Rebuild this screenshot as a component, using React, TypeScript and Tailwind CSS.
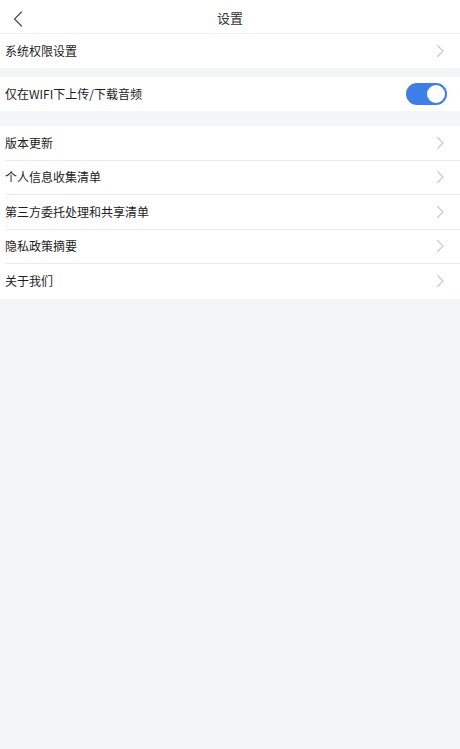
import React from "react";

const font = { fontFamily: '"Noto Sans CJK SC", "Noto Sans", sans-serif' };

function Chevron() {
  return (
    <svg width="8" height="14" viewBox="0 0 8 14" fill="none" className="mr-[16px]">
      <path d="M1.5 1.5l5.5 5.5-5.5 5.5" stroke="#c8c8c8" strokeWidth="1.1" strokeLinecap="round" strokeLinejoin="round" />
    </svg>
  );
}

function Row({
  label,
  divider = true,
  right,
  h = "h-[34.5px]",
}: {
  label: string;
  divider?: boolean;
  right?: React.ReactNode;
  h?: string;
}) {
  return (
    <div className={`flex ${h} items-center bg-white`}>
      <div className={`ml-[5px] flex h-full flex-1 items-center ${divider ? "border-b border-[#ececec]" : ""}`}>
        <span className="flex-1 text-[12px] text-[#1c1c1c]">{label}</span>
        {right ?? <Chevron />}
      </div>
    </div>
  );
}

export default function App() {
  return (
    <div className="flex h-[749px] w-[460px] flex-col bg-[#f4f5f7]" style={font}>
      <div className="relative flex h-[34px] items-center justify-center border-b border-[#eeeeee] bg-white">
        <svg width="10" height="16" viewBox="0 0 10 16" fill="none" className="absolute left-[13px] top-[11px]">
          <path d="M8.5 1L1.5 8l7 7" stroke="#555" strokeWidth="1.4" strokeLinecap="round" strokeLinejoin="round" />
        </svg>
        <span className="mt-[3px] text-[13px] text-[#333]">设置</span>
      </div>
      <Row label="系统权限设置" divider={false} h="h-[34px]" />
      <div className="h-[9px]" />
      <Row
        label="仅在WIFI下上传/下载音频"
        divider={false}
        h="h-[34px]"
        right={
          <div className="mr-[13px] flex h-[22px] w-[41px] items-center justify-end rounded-full bg-[#3d7ee8] pr-[2px]">
            <div className="h-[18px] w-[18px] rounded-full bg-white" />
          </div>
        }
      />
      <div className="h-[15px]" />
      <Row label="版本更新" />
      <Row label="个人信息收集清单" />
      <Row label="第三方委托处理和共享清单" />
      <Row label="隐私政策摘要" />
      <Row label="关于我们" divider={false} />
    </div>
  );
}
